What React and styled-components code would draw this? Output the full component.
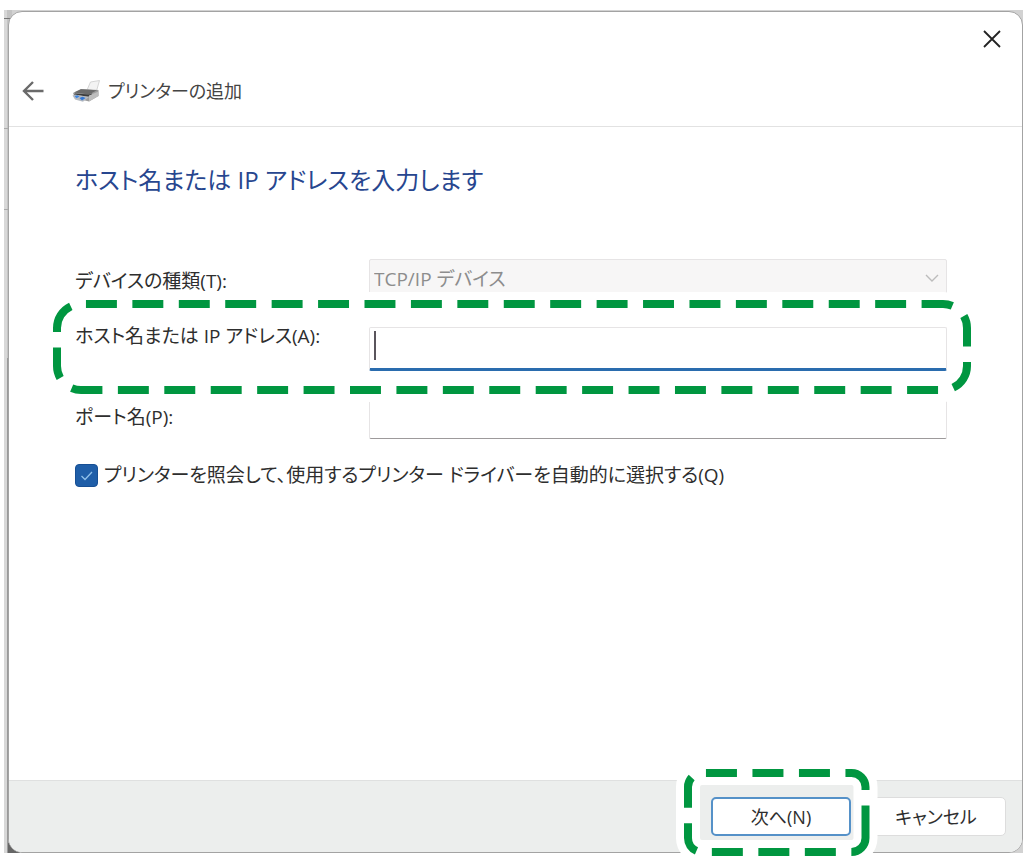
import React from "react";
import styled, { createGlobalStyle, css } from "styled-components";

const GREEN = "#009640";

const GlobalStyle = createGlobalStyle`
  *, *::before, *::after { box-sizing: border-box; }
  body {
    margin: 0;
    background: #ffffff;
    color: #2e2e2e;
    font-family: "Open Sans", "Noto Sans CJK JP", sans-serif;
    font-size: 19px;
    line-height: 28px;
    font-feature-settings: "palt";
  }
  button, input, select { font: inherit; font-feature-settings: inherit; color: inherit; }
`;

const Desktop = styled.div`
  display: flex;
  min-height: calc(100vh - 22px);
  margin: 10px 5px 12px 4px;
  padding: 1px 0 0 4px;
  background:
    linear-gradient(#777, #777) 0 8px / 8px 1px no-repeat,
    linear-gradient(#aaa, #aaa) 0 118px / 5px 1px no-repeat,
    linear-gradient(#aaa, #aaa) 0 199px / 5px 1px no-repeat,
    linear-gradient(#666, #666) 4px 100% / 12px 10px no-repeat,
    linear-gradient(90deg, #d8d8d8 0 3px, transparent 3px) 0 0 / 8px 100% no-repeat,
    linear-gradient(#c4c4c4 0 348px, #9a9a9a 348px) 0 0 / 8px 100% no-repeat,
    #d2d2d2;
`;

const Dialog = styled.div`
  flex: 1;
  display: flex;
  flex-direction: column;
  border: 1px solid #a3a3a3;
  border-radius: 14px;
  background: #ffffff;
`;

const TitleBar = styled.div`
  display: flex;
  justify-content: flex-end;
  padding: 12px 15px 0;
`;

const IconButton = styled.button`
  display: grid;
  place-items: center;
  width: 30px;
  height: 30px;
  padding: 0;
  border: 0;
  background: none;
`;

const Header = styled.header`
  display: flex;
  align-items: center;
  padding: 22px 9px 20px;
  border-bottom: 1px solid #e2e2e2;
`;

const PrinterIcon = styled.svg`
  margin: 0 8px 0 24px;
`;

const HeaderTitle = styled.span`
  color: #444444;
  font-size: 18px;
`;

const Content = styled.main`
  flex: 1;
  padding: 34px 75px 0 66px;
`;

const Heading = styled.h1`
  margin: 0 0 60px;
  color: #27468f;
  font-size: 24px;
  line-height: 38px;
  font-weight: 400;
`;

const Field = styled.div`
  position: relative;
  display: grid;
  grid-template-columns: 294px 1fr;
  align-items: ${(p) => p.$align || "center"};
  margin-bottom: 24px;
`;

const Label = styled.label`
  line-height: 18px;
  white-space: nowrap;
`;

const control = css`
  display: block;
  width: 100%;
  height: 44px;
  padding: 0 4px;
  border: 1px solid #e6e4e5;
  border-radius: 2px;
  background-color: #ffffff;
  outline: none;
`;

const TextInput = styled.input`
  ${control}
  border-bottom: ${(p) => (p.$active ? "3px solid #2a6cae" : "1px solid #9d9a9b")};
  ${(p) =>
    p.$active &&
    css`
      background-image: linear-gradient(#5a555c, #5a555c);
      background-size: 2px 29px;
      background-position: 4px 3px;
      background-repeat: no-repeat;
    `}
`;

const SelectBox = styled.div`
  position: relative;
`;

const Select = styled.select`
  ${control}
  padding-bottom: 4px;
  appearance: none;
  background-color: #f7f6f6;
  color: #8d8d8d;
  opacity: 1;
`;

const Chevron = styled.svg`
  position: absolute;
  right: 8px;
  top: 13px;
  pointer-events: none;
`;

const CheckRow = styled.label`
  display: flex;
  align-items: center;
  gap: 6px;
  line-height: 24px;
  white-space: nowrap;
`;

const CheckBox = styled.input`
  appearance: none;
  flex: none;
  width: 23px;
  height: 23px;
  margin: 0;
  border: 1px solid #174f94;
  border-radius: 4px;
  background: #1f5ea8
    url("data:image/svg+xml,%3Csvg xmlns='http://www.w3.org/2000/svg' viewBox='0 0 21 21'%3E%3Cpath d='M5.5 11l3.5 3.5 7-7.5' fill='none' stroke='%238fc0ea' stroke-width='1.3'/%3E%3C/svg%3E");
`;

const Footer = styled.footer`
  display: flex;
  justify-content: flex-end;
  gap: 15px;
  padding: 16px;
  border-top: 1px solid #dfe0e0;
  border-radius: 0 0 13px 13px;
  background: #eceeed;
`;

const ButtonSlot = styled.div`
  position: relative;
  z-index: 1;
`;

const Button = styled.button`
  display: block;
  width: 140px;
  height: 39px;
  padding: 0;
  border: ${(p) => (p.$primary ? "2px solid #5591c8" : "1px solid #dddddd")};
  border-radius: 5px;
  background: #ffffff;
  font-size: 18px;
`;

const FieldHighlight = styled.svg`
  position: absolute;
  left: -30px;
  top: -35px;
  width: calc(100% + 62px);
  height: calc(100% + 66px);
  fill: none;
  pointer-events: none;
  z-index: 1;

  rect {
    x: 12px;
    y: 12px;
    width: calc(100% - 24px);
    height: calc(100% - 24px);
    rx: 24px;
  }
`;

const ButtonHighlight = styled.svg`
  position: absolute;
  left: -35px;
  top: -36px;
  fill: none;
  pointer-events: none;
`;

const BUTTON_OUTLINE =
  "M189.5 68V77A14 14 0 0 1 175.5 91H26A14 14 0 0 1 12 77V26A14 14 0 0 1 26 12H175.5A14 14 0 0 1 189.5 26Z";

export default function App() {
  return (
    <>
      <GlobalStyle />
      <Desktop>
        <Dialog role="dialog" aria-labelledby="dialog-title">
          <TitleBar>
            <IconButton type="button" aria-label="閉じる">
              <svg width="18" height="18" viewBox="0 0 18 18" fill="none" stroke="#222" strokeWidth="1.8">
                <path d="M1 1L17 17M17 1L1 17" />
              </svg>
            </IconButton>
          </TitleBar>
          <Header>
            <IconButton type="button" aria-label="戻る">
              <svg width="22" height="20" viewBox="0 0 22 20" fill="none" stroke="#6a6a6a" strokeWidth="2.4">
                <path d="M21.5 10H2M11 1L2 10l9 9" />
              </svg>
            </IconButton>
            <PrinterIcon width="28" height="24" viewBox="0 0 28 24" aria-hidden="true">
              <path d="M15 11L18.5 3L27.5 1.5L24.5 12Z" fill="#f3f3f3" stroke="#cccccc" strokeWidth="0.8" />
              <path d="M1 14L9 10L26.5 11V17L17 22.5L3 19Z" fill="#9c9c9c" />
              <path d="M2 13.5L9 10.3L25 11.3L17 15.5Z" fill="#6a6a6a" />
              <path d="M3 14.5L17 15.5L20 14.5V16L16 17.5L2 16Z" fill="#3d3d3d" />
              <path d="M17 16.5L26.5 12.5V17L17 22.5Z" fill="#bdbdbd" />
              <path d="M0.5 16.5L3 15.5L17 18L11 22.8L3 20.5Z" fill="#b6bac0" />
              <path d="M2.5 17L5.5 16.2L7.5 17.5L4.5 19.2Z" fill="#3f86e0" />
              <path d="M7.5 19L10.5 17.8L13.5 19L10 21.5Z" fill="#3478d6" />
            </PrinterIcon>
            <HeaderTitle id="dialog-title">プリンターの追加</HeaderTitle>
          </Header>

          <Content>
            <Heading>ホスト名または IP アドレスを入力します</Heading>
            <Field>
              <Label htmlFor="device">デバイスの種類(T):</Label>
              <SelectBox>
                <Select id="device" disabled>
                  <option>TCP/IP デバイス</option>
                </Select>
                <Chevron width="14" height="12" viewBox="0 0 14 12" fill="none" stroke="#bcbcbc" strokeWidth="1.4">
                  <path d="M1 3l6 6 6-6" />
                </Chevron>
              </SelectBox>
            </Field>
            <Field $align="start">
              <Label htmlFor="host">ホスト名または IP アドレス(A):</Label>
              <TextInput id="host" type="text" $active />
              <FieldHighlight aria-hidden="true">
                <rect stroke="#ffffff" strokeWidth="24" />
                <rect
                  stroke={GREEN}
                  strokeWidth="8"
                  pathLength="126"
                  strokeDasharray="2 1"
                  strokeDashoffset="-0.32"
                />
              </FieldHighlight>
            </Field>
            <Field>
              <Label htmlFor="port">ポート名(P):</Label>
              <TextInput id="port" type="text" />
            </Field>
            <CheckRow>
              <CheckBox type="checkbox" defaultChecked />
              プリンターを照会して、使用するプリンター ドライバーを自動的に選択する(Q)
            </CheckRow>
          </Content>

          <Footer>
            <ButtonSlot>
              <Button type="button" $primary>
                次へ(N)
              </Button>
              <ButtonHighlight width="202" height="104" aria-hidden="true">
                <path d={BUTTON_OUTLINE} stroke="#ffffff" strokeWidth="24" />
                <path d={BUTTON_OUTLINE} stroke={GREEN} strokeWidth="8" strokeDasharray="31 15.5" />
              </ButtonHighlight>
            </ButtonSlot>
            <Button type="button">キャンセル</Button>
          </Footer>
        </Dialog>
      </Desktop>
    </>
  );
}
